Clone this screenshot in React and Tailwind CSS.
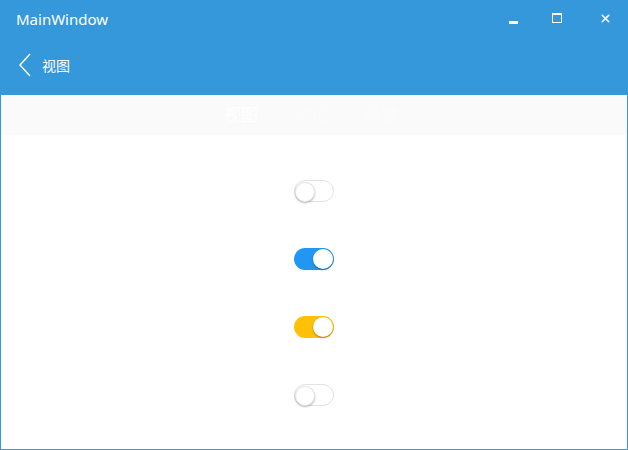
import { X } from 'lucide-react'

// Simple iOS-like switch; colours taken from the screenshot
function Toggle({ on, color }) {
  return (
    <div
      className={`relative w-[40px] h-[22px] rounded-full ${on ? '' : 'bg-white border border-[#e2e2e2]'}`}
      style={on ? { backgroundColor: color } : undefined}
    >
      <div
        className={`absolute top-[1px] w-[20px] h-[20px] rounded-full bg-white ${
          on ? 'right-[1px] shadow-[0_1px_2px_rgba(0,0,0,0.35)]' : 'left-0 top-0 border border-[#e6e6e6] shadow-[0_1px_2px_rgba(0,0,0,0.3)]'
        }`}
      />
    </div>
  )
}

export default function App() {
  return (
    <div
      className="w-[628px] h-[450px] flex flex-col bg-white overflow-hidden"
      style={{ fontFamily: '"Noto Sans", "Noto Sans CJK SC", sans-serif' }}
    >
      <div className="h-[95px] bg-[#3598db] text-white flex flex-col shrink-0">
        <div className="h-[38px] flex items-center pl-[16px]">
          <span className="text-[15px] leading-none">MainWindow</span>
          <div className="ml-auto flex items-center h-full">
            <div className="w-[46px] h-full flex items-center justify-center">
              <div className="w-[9px] h-[3px] bg-white mt-[6px]" />
            </div>
            <div className="w-[46px] h-full flex items-center justify-center -ml-[2px] mr-[2px]">
              <div className="w-[10px] h-[10px] border border-white border-t-[2px] -mt-[2px]" />
            </div>
            <div className="w-[46px] h-full flex items-center justify-center">
              <X size={13} strokeWidth={3} className="-mt-[2px]" />
            </div>
          </div>
        </div>
        <div className="flex items-center h-[60px] pl-[18px] -mt-[3px]">
          <svg width="14" height="24" viewBox="0 0 14 24" className="mr-[10px]">
            <path d="M12 1 L2 12 L12 23" fill="none" stroke="white" strokeWidth="1.4" />
          </svg>
          <span className="text-[14px]">视图</span>
        </div>
      </div>
      <div className="flex-1 flex flex-col border-x border-b border-[#3598db]">
        <div className="h-[40px] bg-[#fafafa] flex items-center justify-center gap-[36px] pr-[6px] shrink-0">
          <span className="text-[17px] text-white">视图</span>
          <span className="text-[17px] text-[#fcfcfc]">讨论</span>
          <span className="text-[17px] text-[#fcfcfc]">设置</span>
        </div>
        <div className="flex flex-col items-center pt-[45px] gap-[46px]">
          <Toggle on={false} />
          <Toggle on color="#2196f3" />
          <Toggle on color="#ffc107" />
          <Toggle on={false} />
        </div>
      </div>
    </div>
  )
}
